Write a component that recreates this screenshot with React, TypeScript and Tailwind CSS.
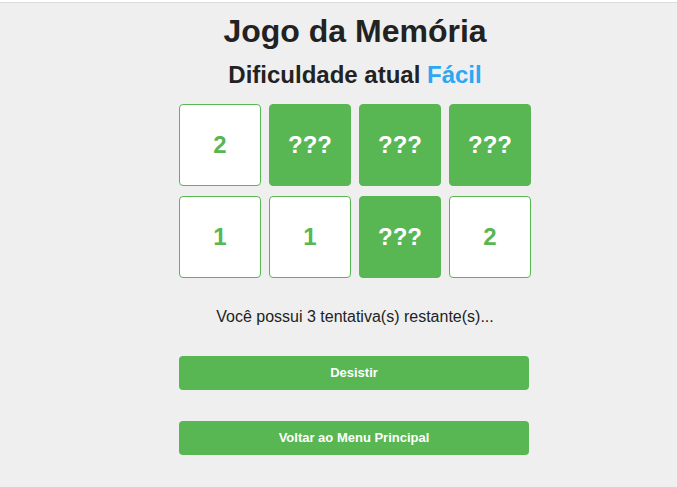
const cards = [
  { value: "2", open: true },
  { value: "???", open: false },
  { value: "???", open: false },
  { value: "???", open: false },
  { value: "1", open: true },
  { value: "1", open: true },
  { value: "???", open: false },
  { value: "2", open: true },
];

export default function App() {
  return (
    <div className="min-h-[487px] bg-[#efefef] font-['Liberation_Sans',Arial,sans-serif] text-[#222]">
      <div className="h-[3px] bg-white border-b border-[#dcdcdc]" />
      <div className="flex justify-center pl-[33px]">
        <div className="w-[352px] flex flex-col items-center">
          <h1 className="mt-[10px] text-[32px] leading-[37px] font-bold">
            Jogo da Memória
          </h1>
          <h2 className="mt-[10px] text-[24px] leading-[30px] font-bold">
            Dificuldade atual <span className="text-[#2ba7f3]">Fácil</span>
          </h2>
          <div className="mt-[14px] grid grid-cols-4 gap-x-2 gap-y-[10px]">
            {cards.map((card, i) => (
              <div
                key={i}
                className={
                  card.open
                    ? "w-[82px] h-[82px] rounded-[4px] border border-[#58b653] bg-white flex items-center justify-center text-[24px] font-bold text-[#58b653]"
                    : "w-[82px] h-[82px] rounded-[4px] border border-[#58b653] bg-[#58b653] flex items-center justify-center text-[24px] font-bold text-white"
                }
              >
                {card.value}
              </div>
            ))}
          </div>
          <p className="mt-[29px] text-[16px] leading-[20px]">
            Você possui 3 tentativa(s) restante(s)...
          </p>
          <button className="self-start mt-[29px] w-[350px] h-[34px] rounded-[4px] bg-[#58b653] text-white text-[13px] font-bold">
            Desistir
          </button>
          <button className="self-start mt-[31px] w-[350px] h-[34px] rounded-[4px] bg-[#58b653] text-white text-[13px] font-bold">
            Voltar ao Menu Principal
          </button>
        </div>
      </div>
    </div>
  );
}
